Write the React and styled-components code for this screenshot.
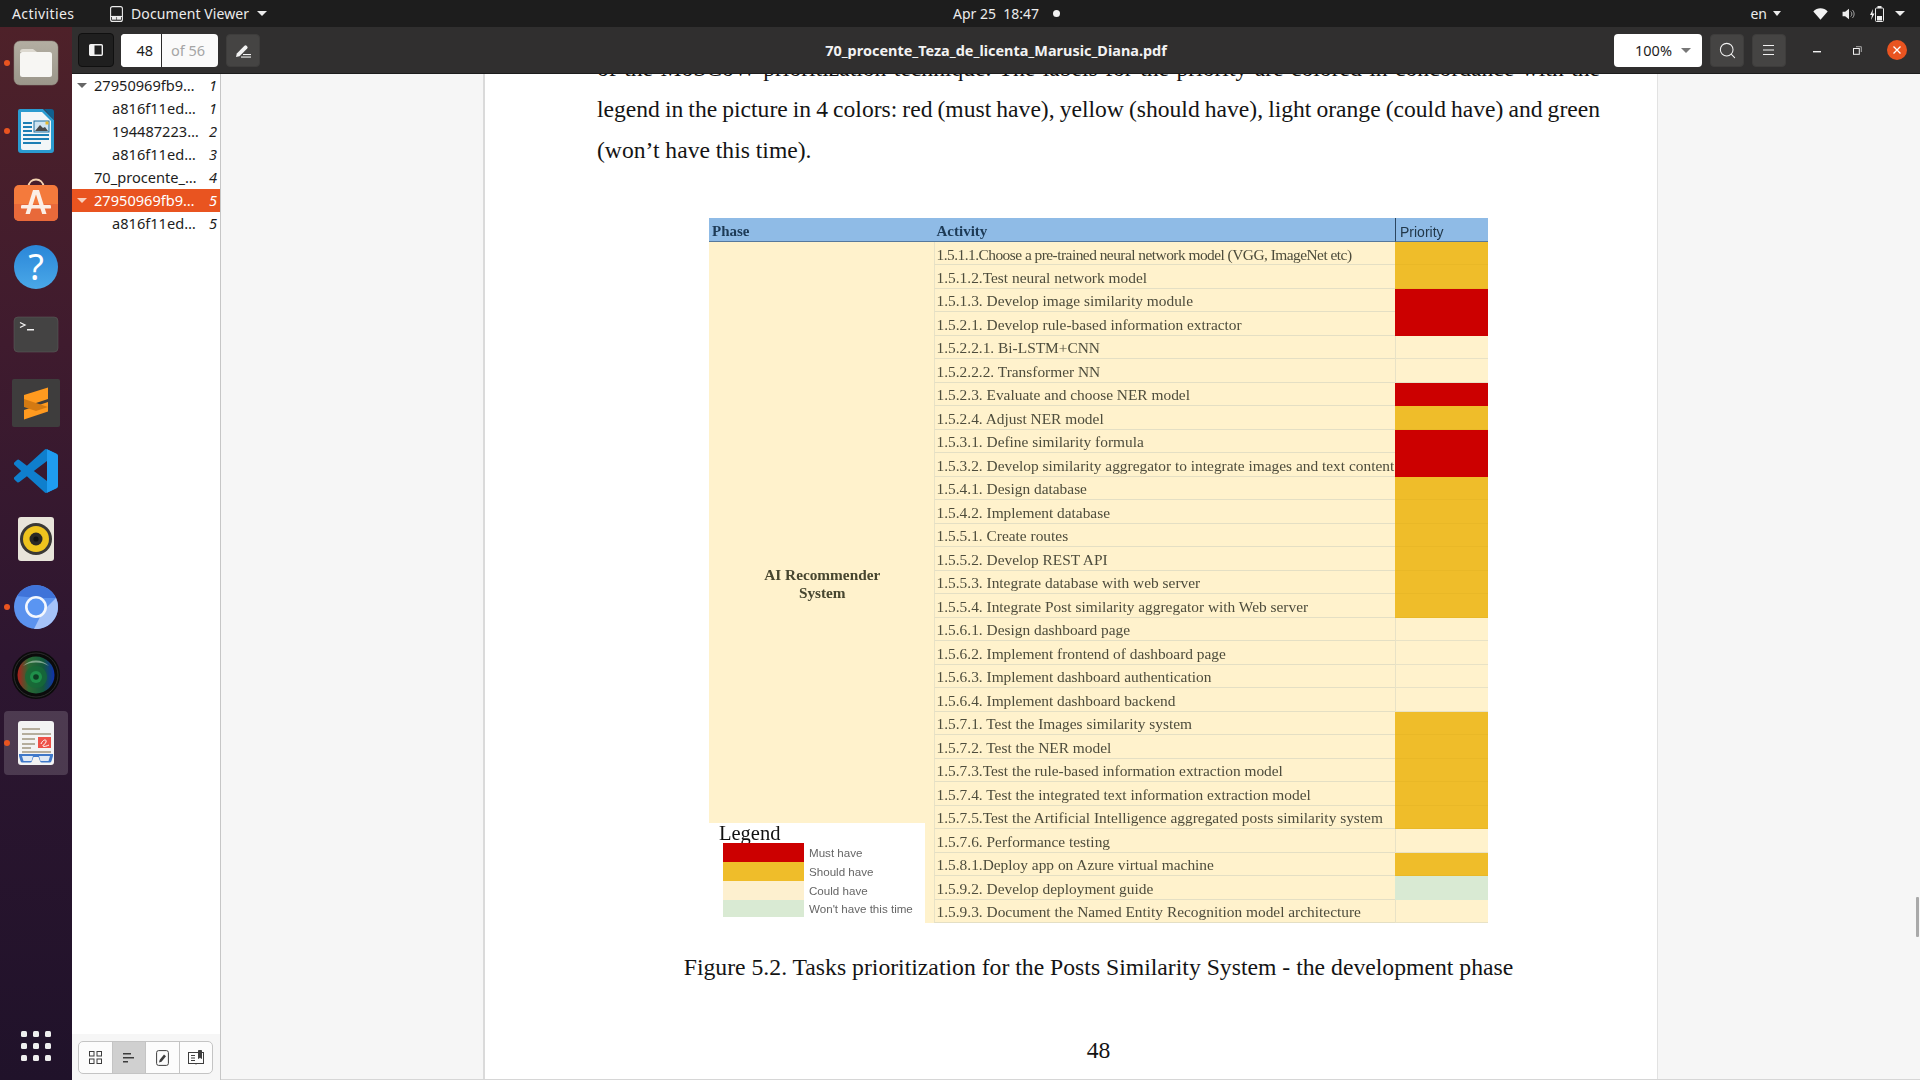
import React from "react";
import styled, { createGlobalStyle } from "styled-components";
import { Search } from "lucide-react";

const Global = createGlobalStyle`
  html, body { margin: 0; padding: 0; background: #1d1d1d; }
  * { box-sizing: border-box; }
`;

const UI = `"Noto Sans", "Open Sans", sans-serif`;
const SERIF = `"Liberation Serif", "Times New Roman", serif`;
const ARIAL = `"Liberation Sans", Arial, sans-serif`;

const Screen = styled.div`
  width: 1920px; height: 1080px; overflow: hidden;
  display: flex; flex-direction: column;
  font-family: ${UI};
`;

/* ---------- GNOME top bar ---------- */
const TopBar = styled.header`
  height: 27px; flex: none; background: #1d1d1d; color: #ececec;
  display: grid; grid-template-columns: 953px auto 1fr; align-items: center;
  font-size: 14px;
`;
const TopLeft = styled.div`display: flex; align-items: center; padding-left: 12px;`;
const Activities = styled.span`width: 98px; letter-spacing: 0.4px;`;
const AppMenu = styled.div`display: flex; align-items: center; gap: 8px; letter-spacing: 0.1px;`;
const Clock = styled.div`display: flex; align-items: center; gap: 14px; white-space: pre;`;
const Dot = styled.i`width: 7px; height: 7px; border-radius: 50%; background: #f2f2f2;`;
const TopRight = styled.div`display: flex; align-items: center; justify-content: flex-end; padding-right: 15px;`;
const Lang = styled.span`margin-right: 6px;`;
const Caret = styled.i`
  width: 0; height: 0; flex: none; display: block;
  border-left: ${p => p.$w || 5}px solid transparent;
  border-right: ${p => p.$w || 5}px solid transparent;
  border-top: ${p => p.$h || 5}px solid ${p => p.$c || "#ececec"};
`;
const TrayIcons = styled.div`display: flex; align-items: center; gap: 14px; margin: 0 11px 0 32px;`;

/* ---------- Layout ---------- */
const Body = styled.div`flex: 1; display: flex; min-height: 0;`;
const Dock = styled.nav`
  width: 72px; flex: none; padding-top: 2px;
  display: flex; flex-direction: column; align-items: center;
  background: linear-gradient(180deg, #4e2129 0%, #3f1b2e 30%, #2d1630 60%, #20122a 100%);
`;
const DockItem = styled.div`
  width: 72px; height: 68px; flex: none; position: relative;
  display: flex; align-items: center; justify-content: center;
  &::before {
    content: ""; position: absolute; left: 4px; top: 2px; width: 64px; height: 64px; border-radius: 4px;
    background: ${p => (p.$active ? "rgba(255,255,255,.16)" : "transparent")};
  }
  svg { position: relative; display: block; }
`;
const RunDot = styled.span`
  position: absolute; left: 4px; top: 31px; width: 6px; height: 6px; border-radius: 50%; background: #e95420;
`;
const AppGrid = styled.div`
  margin-top: auto; margin-bottom: 19px;
  display: grid; grid-template-columns: repeat(3, 6px); gap: 6px;
`;
const AppGridDot = styled.i`width: 6px; height: 6px; border-radius: 1.5px; background: #eeeeee;`;

const Window = styled.div`flex: 1; display: flex; flex-direction: column; min-width: 0;`;
const Header = styled.div`
  height: 47px; flex: none; background: #302f2f; border-bottom: 1px solid #1c1c1c;
  display: grid; grid-template-columns: 1fr auto 1fr; align-items: center; color: #f2f2f2;
`;
const HeadLeft = styled.div`display: flex; align-items: center; padding-left: 6px; gap: 7px;`;
const HeadRight = styled.div`display: flex; align-items: center; justify-content: flex-end; gap: 8px; padding-right: 3px;`;
const Title = styled.div`font-weight: 700; font-size: 14.45px;`;
const ToolBtn = styled.button`
  width: 34px; height: 33px; padding: 0; border-radius: 4px; flex: none;
  display: flex; align-items: center; justify-content: center;
  background: ${p => (p.$on ? "#1f1f1f" : "#454443")};
  border: 1px solid ${p => (p.$on ? "#101010" : "#3e3d3c")};
  ${p => p.$on && "width: 36px; height: 34px;"}
  ${p => p.$gapped && "margin-left: 1px;"}
`;
const PageEntry = styled.div`
  width: 97px; height: 33px; display: flex; background: #fafafa; border-radius: 4px; overflow: hidden; font-size: 14.5px;
`;
const PageInput = styled.span`
  width: 41px; background: #fff; color: #1d1d1d; border-right: 1px solid #2a2a2a;
  display: flex; align-items: center; justify-content: flex-end; padding-right: 8px;
`;
const PageTotal = styled.span`flex: 1; color: #a5a5a5; display: flex; align-items: center; padding-left: 9px;`;
const ZoomBox = styled.div`
  width: 88px; height: 33px; background: #fff; border-radius: 4px; color: #1d1d1d; font-size: 14.5px;
  display: flex; align-items: center; justify-content: space-between; padding: 0 11px 0 21px;
`;
const WinControls = styled.div`display: flex; margin-left: 3px;`;
const WinBtn = styled.span`width: 40px; height: 24px; display: flex; align-items: center; justify-content: center;`;

const Content = styled.div`flex: 1; display: flex; min-height: 0;`;
const Sidebar = styled.aside`
  width: 149px; flex: none; background: #fff; border-right: 1px solid #c6c6c6;
  display: flex; flex-direction: column;
`;
const Outline = styled.div`flex: 1;`;
const OutlineRow = styled.div`
  height: 23px; display: flex; align-items: center; font-size: 14.6px; line-height: 20px; position: relative;
  padding: 0 3px 1px ${p => (p.$level ? 40 : 22)}px;
  background: ${p => (p.$sel ? "#e95420" : "transparent")};
  color: ${p => (p.$sel ? "#fff" : "#1d1d1d")};
`;
const RowCaret = styled(Caret)`position: absolute; left: 5px; top: 9px;`;
const RowText = styled.span`flex: 1; white-space: nowrap; overflow: hidden;`;
const RowPage = styled.em`font-style: italic;`;
const SideFooter = styled.div`
  height: 46px; flex: none; background: #f6f6f6; padding: 7px 0 0 6px;
`;
const Tabs = styled.div`
  width: 135px; height: 33px; display: flex; background: #fcfcfc;
  border: 1px solid #c4c4c4; border-radius: 5px; overflow: hidden;
`;
const Tab = styled.span`
  flex: 1; display: flex; align-items: center; justify-content: center;
  background: ${p => (p.$on ? "#d0d0d0" : "transparent")};
  & + & { border-left: 1px solid #c4c4c4; }
`;

/* ---------- Document view ---------- */
const View = styled.main`
  flex: 1; min-width: 0; background: #f6f6f6; padding-left: 262px; position: relative;
  border-bottom: 1px solid #d6d6d6; overflow: hidden;
`;
const Page = styled.article`
  width: 1175px; height: 100%; background: #fff; overflow: hidden;
  border-left: 2px solid #dadada; border-right: 1px solid #e2e2e2;
  padding: 0 57px 0 112px;
  font-family: ${SERIF}; font-size: 23.7px; color: #141414;
`;
const Paragraph = styled.div`margin-top: -26px; line-height: 41px; font-size: 23.6px;`;
const Line = styled.div`
  white-space: nowrap;
  text-align: ${p => (p.$just ? "justify" : "left")};
  text-align-last: ${p => (p.$just ? "justify" : "left")};
  word-spacing: ${p => p.$tight || 0}px;
`;
const Sheet = styled.div`
  width: 779px; height: 705px; margin: 47px auto 0; position: relative;
  display: grid; grid-template-columns: 224.5px 461.5px 1fr; grid-template-rows: 24px repeat(29, 1fr);
  filter: blur(0.45px); background: #fff2cc;
  font-size: 15.4px; line-height: 1; color: #4d4c3c;
`;
const HeadCell = styled.div`
  background: #8fbbe6; border-bottom: 1px solid #56799c; color: #1d3a56;
  display: flex; align-items: center; padding: ${p => (p.$sans ? "5px 0 0 4px" : "3px 0 0 3px")};
  font: ${p => (p.$sans ? `400 14px ${ARIAL}` : `700 15px ${SERIF}`)};
  ${p => p.$sans && "border-left: 1px solid #2c4660; color: #22384a;"}
`;
const PhaseCell = styled.div`
  grid-row: 2 / span 29; position: relative;
  display: flex; align-items: center; justify-content: center; text-align: center;
  padding: 2px 0 0 2px;
  font-weight: 700; font-size: 15.3px; line-height: 18px; color: #47462f;
`;
const ActivityCell = styled.div`
  grid-column: 2; display: flex; align-items: center; padding: 2px 0 0 2px; white-space: nowrap; overflow: hidden;
  border-left: 1px solid #e8e2c6; border-bottom: 1px solid #e4dfc4;
  ${p => p.$tight && "letter-spacing: -0.52px;"}
`;
const PRIORITY = { y: "#efbd2a", r: "#cc0000", l: "#fff2cc", g: "#d9ead3" };
const PriorityCell = styled.div`
  grid-column: 3; background: ${p => PRIORITY[p.$t]};
  border-left: 1px solid ${p => (p.$t === "l" ? "#e8e2c6" : PRIORITY[p.$t])};
  ${p => (p.$t === "l" ? "border-bottom: 1px solid #e8e2c6;" : p.$t === "y" ? "border-bottom: 1px solid #e9b827;" : "")}
`;
const Legend = styled.div`
  position: absolute; left: 0; bottom: 0; width: 216px; height: 100px; background: #fff;
  padding: 0 0 0 14px; text-align: left; font-weight: 400;
`;
const LegendTitle = styled.div`
  font-size: 20.5px; line-height: 20px; color: #111; margin-left: -4px;
`;
const LegendRow = styled.div`
  height: ${p => p.$h}px; display: flex; align-items: center;
  font: 400 11.6px ${ARIAL}; color: #666;
`;
const Swatch = styled.i`width: 81px; height: 100%; background: ${p => p.$c}; margin-right: 5px; flex: none;`;
const Caption = styled.div`margin-top: 29px; line-height: 30px; text-align: center; white-space: nowrap;`;
const PageNumber = styled.div`margin-top: 53px; line-height: 30px; text-align: center;`;
const Scrollbar = styled.span`
  position: absolute; right: 1px; top: 823px; width: 3px; height: 40px; background: #a9a9a9; border-radius: 1px;
`;

/* ---------- Data ---------- */
const OUTLINE = [
  { t: "27950969fb9…", p: 1, c: 1 }, { t: "a816f11ed…", p: 1, l: 1 }, { t: "194487223…", p: 2, l: 1 },
  { t: "a816f11ed…", p: 3, l: 1 }, { t: "70_procente_…", p: 4 }, { t: "27950969fb9…", p: 5, c: 1, s: 1 },
  { t: "a816f11ed…", p: 5, l: 1 },
];
const ROWS = [
  ["1.5.1.1.Choose a pre-trained neural network model (VGG, ImageNet etc)", "y"],
  ["1.5.1.2.Test neural network model", "y"],
  ["1.5.1.3. Develop image similarity module", "r"],
  ["1.5.2.1. Develop rule-based information extractor", "r"],
  ["1.5.2.2.1. Bi-LSTM+CNN", "l"],
  ["1.5.2.2.2. Transformer NN", "l"],
  ["1.5.2.3. Evaluate and choose NER model", "r"],
  ["1.5.2.4. Adjust NER model", "y"],
  ["1.5.3.1. Define similarity formula", "r"],
  ["1.5.3.2. Develop similarity aggregator to integrate images and text content", "r"],
  ["1.5.4.1. Design database", "y"],
  ["1.5.4.2. Implement database", "y"],
  ["1.5.5.1. Create routes", "y"],
  ["1.5.5.2. Develop REST API", "y"],
  ["1.5.5.3. Integrate database with web server", "y"],
  ["1.5.5.4. Integrate Post similarity aggregator with Web server", "y"],
  ["1.5.6.1. Design dashboard page", "l"],
  ["1.5.6.2. Implement frontend of dashboard page", "l"],
  ["1.5.6.3. Implement dashboard authentication", "l"],
  ["1.5.6.4. Implement dashboard backend", "l"],
  ["1.5.7.1. Test the Images similarity system", "y"],
  ["1.5.7.2. Test the NER model", "y"],
  ["1.5.7.3.Test the rule-based information extraction model", "y"],
  ["1.5.7.4. Test the integrated text information extraction model", "y"],
  ["1.5.7.5.Test the Artificial Intelligence aggregated posts similarity system", "y"],
  ["1.5.7.6. Performance testing", "l"],
  ["1.5.8.1.Deploy app on Azure virtual machine", "y"],
  ["1.5.9.2. Develop deployment guide", "g"],
  ["1.5.9.3. Document the Named Entity Recognition model architecture", "l"],
];
const LEGEND = [
  ["Must have", "#cc0000", 19], ["Should have", "#efbd2a", 19], ["Could have", "#fdf0cf", 19], ["Won't have this time", "#d9ead3", 17],
];

/* ---------- Dock icons ---------- */
const FilesIcon = () => (
  <svg width="46" height="46" viewBox="0 0 46 46">
    <defs><linearGradient id="fb" x1="0" y1="0" x2="0" y2="1"><stop offset="0" stopColor="#b3aea2"/><stop offset="1" stopColor="#9b968a"/></linearGradient></defs>
    <rect x="1" y="1" width="44" height="44" rx="6" fill="url(#fb)" stroke="#8f8a7e" strokeWidth=".5"/>
    <path d="M7 12a3 3 0 0 1 3-3h10l4 3h-17z" fill="#ddd9d0"/>
    <rect x="7" y="12" width="32" height="25" rx="2.5" fill="#f7f6f3"/>
  </svg>
);
const WriterIcon = () => (
  <svg width="38" height="46" viewBox="0 0 38 46">
    <path d="M3 1h23l11 11v30a3 3 0 0 1-3 3H4a3 3 0 0 1-3-3V3a2 2 0 0 1 2-2z" fill="#2a9bd0"/>
    <path d="M4 4h21l9 9v27a2 2 0 0 1-2 2H6a2 2 0 0 1-2-2z" fill="#f2f6f8"/>
    <path d="M27 1h7a3 3 0 0 1 3 3v8z" fill="#11608f"/>
    <g fill="#1c7fb5"><rect x="6" y="14" width="9" height="2"/><rect x="6" y="18" width="9" height="2"/><rect x="6" y="22" width="9" height="2"/><rect x="6" y="26" width="26" height="2"/><rect x="6" y="30" width="26" height="2"/><rect x="6" y="34" width="18" height="2"/></g>
    <rect x="17" y="13" width="15" height="11" fill="#cfe4f1" stroke="#1c6f9f"/>
    <path d="M18 23l5-6 3 3 2-1 3 4z" fill="#4a4a4a"/><rect x="28.5" y="13.5" width="3" height="3" fill="#e8b92c"/>
  </svg>
);
const StoreIcon = () => (
  <svg width="46" height="46" viewBox="0 0 46 46">
    <path d="M15.500 11C15.500 1 30.500 1 30.500 11" fill="none" stroke="#f3d2b0" strokeWidth="1.800"/>
    <rect x="1" y="9" width="44" height="36" rx="5" fill="#f47a3c"/>
    <path d="M1 28h44v12a5 5 0 0 1-5 5H6a5 5 0 0 1-5-5z" fill="#e8693a"/>
    <path d="M20 14h6l7.500 24h-4.300L23 18.500 16.800 38h-4.300z" fill="#fbeee6"/>
    <rect x="8" y="29" width="30" height="3.600" rx="1.200" fill="#fbeee6"/>
  </svg>
);
const HelpIcon = () => (
  <svg width="46" height="46" viewBox="0 0 46 46">
    <defs><linearGradient id="hb" x1="0" y1="0" x2="0" y2="1"><stop offset="0" stopColor="#2a86d8"/><stop offset="1" stopColor="#4aa8e8"/></linearGradient></defs>
    <circle cx="23" cy="23" r="22" fill="url(#hb)"/>
    <text x="23" y="36" textAnchor="middle" fontFamily={UI} fontSize="36" fill="#fff">?</text>
  </svg>
);
const TerminalIcon = () => (
  <svg width="46" height="38" viewBox="0 0 46 38">
    <rect x="1" y="1" width="44" height="35" rx="4" fill="#444343" stroke="#5a5958" strokeWidth=".6"/>
    <path d="M7 6.500l5 2.500-5 2.500" fill="none" stroke="#f2f2f2" strokeWidth="1.300"/><rect x="14" y="13" width="7" height="1.500" fill="#f2f2f2"/>
  </svg>
);
const SublimeIcon = () => (
  <svg width="48" height="48" viewBox="0 0 48 48">
    <rect width="48" height="48" rx="2" fill="#3e3d3d"/>
    <path d="M36 8.500L12 16v12l24-8z" fill="#ff9a1f"/>
    <path d="M36 23L12 31v9.500l24-8z" fill="#ff9a1f"/>
    <path d="M12 22l24 8-12 4-12-4z" fill="#d47a12" transform="translate(0 -2)"/>
  </svg>
);
const CodeIcon = () => (
  <svg width="44" height="44" viewBox="0 0 100 100">
    <path fill="#0f7fcd" d="M96.46 10.8 75.86.87a6.23 6.23 0 0 0-7.1 1.2L29.35 38.04 12.16 25a4.16 4.16 0 0 0-5.32.24L1.34 30.25a4.17 4.17 0 0 0 0 6.16L16.25 50 1.34 63.6a4.17 4.17 0 0 0 0 6.16l5.5 5a4.16 4.16 0 0 0 5.32.24l17.19-13.04 39.41 35.96a6.2 6.2 0 0 0 7.1 1.2l20.6-9.92a6.25 6.25 0 0 0 3.54-5.63V16.43a6.25 6.25 0 0 0-3.54-5.63zM75 72.7 45.1 50 75 27.3z"/>
    <path fill="#1f9cf0" d="M75 99.6V.4l21.46 10.4A6.25 6.25 0 0 1 100 16.43v67.14a6.25 6.25 0 0 1-3.54 5.63z"/>
  </svg>
);
const RhythmIcon = () => (
  <svg width="38" height="44" viewBox="0 0 38 44">
    <rect x="1" y="0" width="36" height="44" rx="3" fill="#e8e4da"/>
    <circle cx="19" cy="22" r="16" fill="#3a3936"/><circle cx="19" cy="22" r="13" fill="#efc41e"/>
    <circle cx="19" cy="22" r="6.500" fill="#2a2926"/><circle cx="19" cy="22" r="2.600" fill="#111"/>
  </svg>
);
const ChromeIcon = () => (
  <svg width="46" height="46" viewBox="0 0 46 46">
    <circle cx="23" cy="23" r="22" fill="#5b92ee"/>
    <path d="M4 12A22 22 0 0 1 43 14L23 14z" fill="#3f73d9"/>
    <path d="M43 14A22 22 0 0 1 21 45L30 27z" fill="#a6c3f8"/>
    <circle cx="23" cy="23" r="11" fill="#f4f7fd"/><circle cx="23" cy="23" r="8.400" fill="#5a95f2"/>
  </svg>
);
const LensIcon = () => (
  <svg width="48" height="48" viewBox="0 0 48 48">
    <defs>
      <linearGradient id="ln" x1="0" y1="0" x2="1" y2="0"><stop offset="0" stopColor="#b0201c"/><stop offset=".3" stopColor="#2a6a34"/><stop offset=".7" stopColor="#14583c"/><stop offset="1" stopColor="#1030b0"/></linearGradient>
    </defs>
    <circle cx="24" cy="24" r="24" fill="#0b0b0b"/><circle cx="24" cy="24" r="22" fill="none" stroke="#333" strokeWidth=".8"/>
    <circle cx="24" cy="24" r="18.500" fill="url(#ln)"/><circle cx="24" cy="26" r="11" fill="#156b38" opacity=".75"/><circle cx="24" cy="26" r="6" fill="#1f8f4a"/><circle cx="24" cy="26" r="2.800" fill="#0d3d22"/>
    <path d="M11 15a18 18 0 0 1 26 0 26 26 0 0 0-26 0z" fill="#cde0d2" opacity=".55"/>
  </svg>
);
const EvinceIcon = () => (
  <svg width="38" height="46" viewBox="0 0 38 46">
    <rect x="1" y="1" width="36" height="44" rx="3" fill="#f3f3f3"/>
    <g fill="#b5ad9c"><rect x="5" y="8" width="18" height="2"/><rect x="5" y="13" width="29" height="2"/><rect x="5" y="18" width="13" height="2"/><rect x="5" y="23" width="13" height="2"/><rect x="5" y="27" width="9" height="2"/><rect x="5" y="31" width="29" height="2"/></g>
    <rect x="21" y="17" width="13" height="11" fill="#ee5148"/>
    <path d="M24 24c2-5 6-5 5-2s-4 3-3 4 4 0 6-1" fill="none" stroke="#fff" strokeWidth="1"/>
    <path d="M2 34h34v2l-1.500 5a2 2 0 0 1-2 1.500h-7.500a2 2 0 0 1-2-1.500l-1.500-4h-5l-1.500 4a2 2 0 0 1-2 1.500h-7.500a2 2 0 0 1-2-1.500L2 36z" fill="#3f78c9"/>
    <path d="M5 36h11l-1.500 5h-8zM22 36h11l-1.500 5h-8z" fill="#dfe9f5"/>
  </svg>
);
const DOCK = [
  [FilesIcon, { d: 1 }], [WriterIcon, { d: 1 }], [StoreIcon], [HelpIcon], [TerminalIcon], [SublimeIcon], [CodeIcon],
  [RhythmIcon], [ChromeIcon, { d: 1 }], [LensIcon], [EvinceIcon, { d: 1, a: 1 }],
];

/* ---------- Small glyph icons ---------- */
const ViewerGlyph = () => (
  <svg width="13" height="16" viewBox="0 0 13 16" fill="none" stroke="#ececec" strokeWidth="1.100">
    <rect x=".6" y=".6" width="11.800" height="14.800" rx="2"/><path d="M1 10.500h11" /><rect x="2.500" y="10.500" width="3.200" height="2.600" fill="#ececec"/><rect x="7.300" y="10.500" width="3.200" height="2.600" fill="#ececec"/>
  </svg>
);
const Wifi = () => (
  <svg width="15" height="12" viewBox="0 0 23 16" preserveAspectRatio="none"><path d="M11.500 15.500L.5 4.500C3.500 1.800 7.300.4 11.500.4s8 1.400 11 4.100z" fill="#f2f2f2"/></svg>
);
const Volume = () => (
  <svg width="14" height="12" viewBox="0 0 15 14" fill="#ececec">
    <path d="M0 4.500h3L7.500 1v12L3 9.500H0z"/><path d="M9.500 4a4 4 0 0 1 0 6M11.500 2.300a6.500 6.500 0 0 1 0 9.400" fill="none" stroke="#b5b5b5" strokeWidth="1"/>
  </svg>
);
const Battery = () => (
  <svg width="14" height="16" viewBox="0 0 14 16">
    <path d="M3 3L0 9h2l-1 5 3.500-6.500H2.500z" fill="#f2f2f2"/>
    <rect x="5.500" y="2" width="8" height="13.500" rx="1" fill="none" stroke="#ececec"/><rect x="7.500" y="0" width="4" height="2" fill="#ececec"/>
    <rect x="7" y="10" width="5" height="4.500" fill="#ececec"/>
  </svg>
);
const PanelGlyph = () => (
  <svg width="14" height="12" viewBox="0 0 14 12"><rect x=".7" y=".7" width="12.600" height="10.600" rx="1" fill="none" stroke="#f2f2f2" strokeWidth="1.400"/><rect x="1" y="1" width="4.500" height="10" fill="#f2f2f2"/></svg>
);
const PenGlyph = () => (
  <svg width="16" height="15" viewBox="0 0 16 15"><path d="M1 14l.8-3.500L9.500 2.800a1.500 1.500 0 0 1 2.100 0l.6.600a1.500 1.500 0 0 1 0 2.100L4.500 13.200z" fill="#f2f2f2"/><rect x="8" y="11" width="8" height="1.100" fill="#f2f2f2"/><rect x="6" y="13.500" width="10" height="1.100" fill="#f2f2f2"/></svg>
);
const MenuGlyph = () => (
  <svg width="12" height="12" viewBox="0 0 12 12" fill="#f2f2f2"><rect y="1" width="11" height="1"/><rect y="5.500" width="11" height="1"/><rect y="10" width="11" height="1"/></svg>
);
const MinGlyph = () => <svg width="10" height="10" viewBox="0 0 10 10"><rect x="1" y="6" width="8" height="1.400" fill="#f2f2f2"/></svg>;
const RestoreGlyph = () => (
  <svg width="9" height="9" viewBox="0 0 9 9" fill="none" stroke="#f2f2f2"><rect x=".5" y="2.500" width="5.800" height="5.800"/><path d="M3 .7h5.300V6" stroke="#aaa"/></svg>
);
const CloseGlyph = () => (
  <svg width="20" height="20" viewBox="0 0 20 20"><circle cx="10" cy="10" r="10" fill="#e95420"/><path d="M6.500 6.500l7 7M13.500 6.500l-7 7" stroke="#fff" strokeWidth="1.300"/></svg>
);
const ThumbGlyph = () => (
  <svg width="13" height="13" viewBox="0 0 13 13" fill="none" stroke="#3d3d3d"><rect x=".5" y=".5" width="4.500" height="4.500"/><rect x="8" y=".5" width="4.500" height="4.500"/><rect x=".5" y="8" width="4.500" height="4.500"/><rect x="8" y="8" width="4.500" height="4.500"/></svg>
);
const ListGlyph = () => (
  <svg width="12" height="12" viewBox="0 0 12 12" fill="#3d3d3d"><rect y="1" width="8" height="1.500"/><rect y="5" width="11" height="1.500"/><rect y="9" width="5" height="1.500"/></svg>
);
const NoteGlyph = () => (
  <svg width="13" height="16" viewBox="0 0 13 16"><rect x=".6" y=".6" width="11.800" height="14.800" rx="2" fill="none" stroke="#3d3d3d"/><path d="M3 12.500l.6-2.500L8 4.500l2 1.800-4.500 5.500z" fill="#3d3d3d"/></svg>
);
const BookGlyph = () => (
  <svg width="16" height="15" viewBox="0 0 16 15" fill="none" stroke="#3d3d3d"><rect x=".5" y="2.500" width="15" height="11"/><path d="M3 5.500h4M3 8h4M3 10.500h4"/><path d="M8 13.500v1" /><path d="M10.500 .5h3v8l-1.500-1.200-1.500 1.200z" fill="#3d3d3d"/></svg>
);

export default function App() {
  return (
    <Screen>
      <Global />
      <TopBar>
        <TopLeft>
          <Activities>Activities</Activities>
          <AppMenu><ViewerGlyph /><span>Document Viewer</span><Caret /></AppMenu>
        </TopLeft>
        <Clock><span>Apr 25  18:47</span><Dot /></Clock>
        <TopRight>
          <Lang>en</Lang><Caret $w={4.500} $h={5} />
          <TrayIcons><Wifi /><Volume /><Battery /></TrayIcons>
          <Caret />
        </TopRight>
      </TopBar>
      <Body>
        <Dock>
          {DOCK.map(([Icon, o = {}], i) => (
            <DockItem key={i} $active={o.a}>{o.d && <RunDot />}<Icon /></DockItem>
          ))}
          <AppGrid>{Array.from({ length: 9 }, (_, i) => <AppGridDot key={i} />)}</AppGrid>
        </Dock>
        <Window>
          <Header>
            <HeadLeft>
              <ToolBtn $on><PanelGlyph /></ToolBtn>
              <PageEntry><PageInput>48</PageInput><PageTotal>of 56</PageTotal></PageEntry>
              <ToolBtn $gapped><PenGlyph /></ToolBtn>
            </HeadLeft>
            <Title>70_procente_Teza_de_licenta_Marusic_Diana.pdf</Title>
            <HeadRight>
              <ZoomBox><span>100%</span><Caret $c="#777" /></ZoomBox>
              <ToolBtn><Search size={19} color="#f2f2f2" strokeWidth={1.3} /></ToolBtn>
              <ToolBtn><MenuGlyph /></ToolBtn>
              <WinControls>
                <WinBtn><MinGlyph /></WinBtn><WinBtn><RestoreGlyph /></WinBtn><WinBtn><CloseGlyph /></WinBtn>
              </WinControls>
            </HeadRight>
          </Header>
          <Content>
            <Sidebar>
              <Outline>
                {OUTLINE.map((r, i) => (
                  <OutlineRow key={i} $level={r.l} $sel={r.s}>
                    {r.c && <RowCaret $c={r.s ? "#f8d0bd" : "#666"} />}
                    <RowText>{r.t}</RowText><RowPage>{r.p}</RowPage>
                  </OutlineRow>
                ))}
              </Outline>
              <SideFooter>
                <Tabs>
                  <Tab><ThumbGlyph /></Tab><Tab $on><ListGlyph /></Tab><Tab><NoteGlyph /></Tab><Tab><BookGlyph /></Tab>
                </Tabs>
              </SideFooter>
            </Sidebar>
            <View>
              <Page>
                <Paragraph>
                  <Line $just>of the MoSCoW prioritization technique. The labels for the priority are colored in concordance with the</Line>
                  <Line $just $tight={-0.85}>legend in the picture in 4 colors: red (must have), yellow (should have), light orange (could have) and green</Line>
                  <Line>(won’t have this time).</Line>
                </Paragraph>
                <Sheet>
                  <HeadCell>Phase</HeadCell><HeadCell>Activity</HeadCell><HeadCell $sans>Priority</HeadCell>
                  <PhaseCell>
                    <span>AI Recommender<br />System</span>
                    <Legend>
                      <LegendTitle>Legend</LegendTitle>
                      {LEGEND.map(([t, c, h]) => <LegendRow key={t} $h={h}><Swatch $c={c} />{t}</LegendRow>)}
                    </Legend>
                  </PhaseCell>
                  {ROWS.map(([t, p], i) => (
                    <React.Fragment key={i}>
                      <ActivityCell $tight={i === 0}>{t}</ActivityCell>
                      <PriorityCell $t={p} />
                    </React.Fragment>
                  ))}
                </Sheet>
                <Caption>Figure 5.2. Tasks prioritization for the Posts Similarity System - the development phase</Caption>
                <PageNumber>48</PageNumber>
              </Page>
              <Scrollbar />
            </View>
          </Content>
        </Window>
      </Body>
    </Screen>
  );
}
